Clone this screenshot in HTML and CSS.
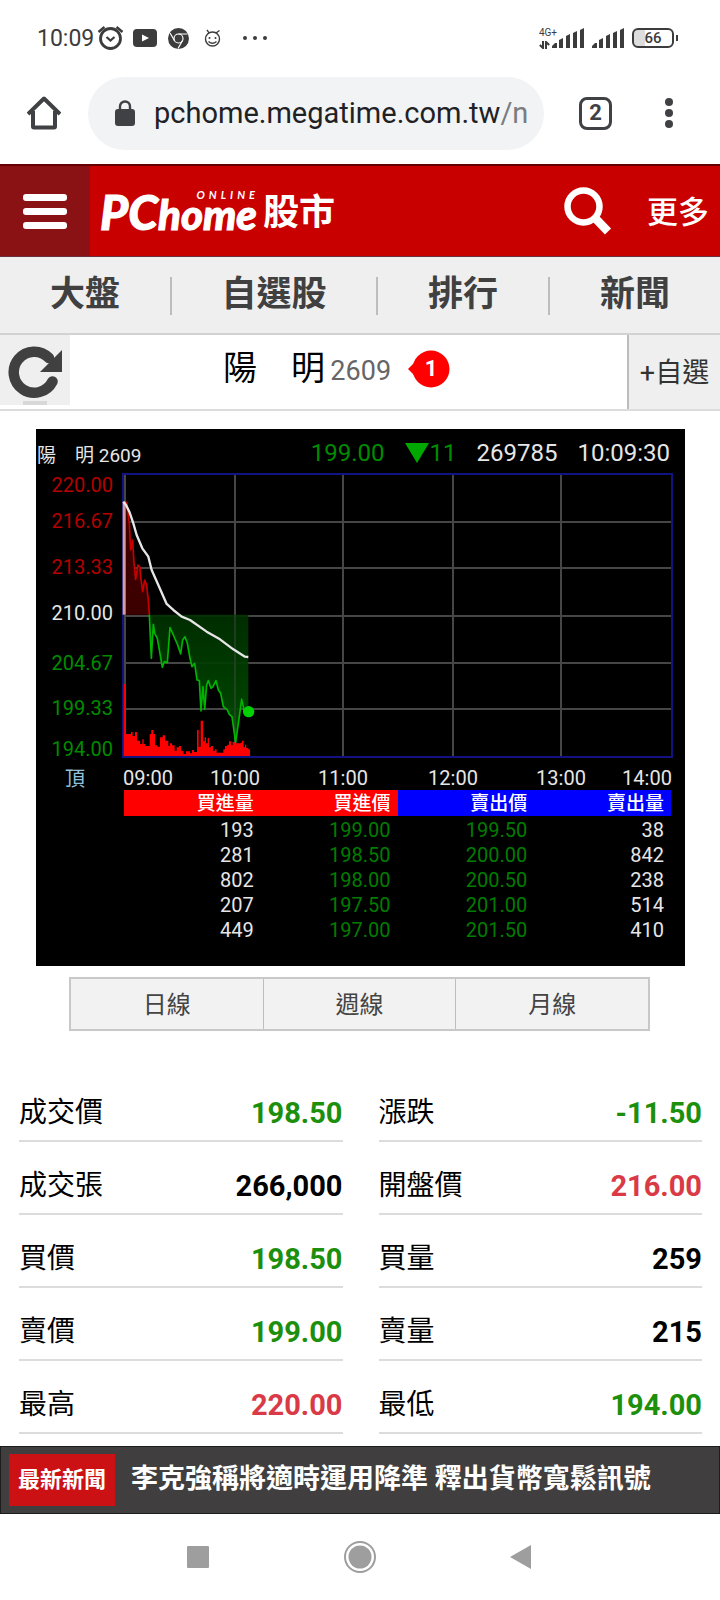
FILE: index.html
```html
<!DOCTYPE html>
<html lang="zh-Hant">
<head>
<meta charset="utf-8">
<meta name="viewport" content="width=device-width, initial-scale=1">
<title>PChome 股市 陽明 2609</title>
<link rel="stylesheet" href="styles.css">
</head>
<body>
<div class="screen">
  <div class="status">
    <div class="status-left">
      <span class="clock">10:09</span>
      <svg width="27" height="26" viewBox="0 0 27 26" fill="none" stroke="#3c3c3c" aria-hidden="true"><circle cx="13.500" cy="13.500" r="10" stroke-width="2.800"/><path d="M9.500 12l4 3.500 4-3.500" stroke-width="2.200"/><path d="M1.500 7l6-5M25.500 7l-6-5" stroke-width="2.400"/></svg>
      <svg width="24" height="18" viewBox="0 0 24 18" aria-hidden="true"><rect width="24" height="18" rx="4" fill="#3c3c3c"/><path d="M9 5.500l7 3.500-7 3.500z" fill="#fff"/></svg>
      <svg class="chrome" width="21" height="21" viewBox="0 0 21 21" aria-hidden="true"><circle cx="10.500" cy="10.500" r="10.500" fill="#3c3c3c"/><g fill="none" stroke="#fff" stroke-width="1.200"><circle cx="10.500" cy="10.500" r="4.500"/><path d="M10.500 6H19.500M6.600 12.700L2 5M14.400 12.700L10 20.500"/></g></svg>
      <svg class="face" width="17" height="18" viewBox="0 0 17 18" fill="none" stroke="#3c3c3c" stroke-width="1.400" aria-hidden="true"><circle cx="8.500" cy="10" r="7"/><path d="M5 4L3 .8M12 4l3.500-2.500M4.500 12.500q4 3.500 8 0"/><circle cx="5.500" cy="9" r="1" fill="#3c3c3c" stroke="none"/><circle cx="11.500" cy="9" r="1" fill="#3c3c3c" stroke="none"/></svg>
      <svg class="more-dots" width="24" height="4" viewBox="0 0 24 4" fill="#3c3c3c" aria-hidden="true"><circle cx="2" cy="2" r="2"/><circle cx="12" cy="2" r="2"/><circle cx="22" cy="2" r="2"/></svg>
    </div>
    <div class="status-right">
      <div class="network">
        <span class="net-type">4G+</span>
        <svg width="11" height="8" viewBox="0 0 11 8" fill="none" stroke="#3c3c3c" stroke-width="2" aria-hidden="true"><path d="M4 0v7L.8 4M7 8V1l3.200 3"/></svg>
      </div>
      <svg width="32" height="20" viewBox="0 0 32 20" fill="#3c3c3c" aria-hidden="true"><path d="M0 20v-2l3-3h2v5zM7 12l4-2v10H7zM14 8l4-2v14h-4zM21 5l4-2v17h-4zM28 2l4-2v20h-4z"/></svg>
      <svg width="32" height="20" viewBox="0 0 32 20" fill="#3c3c3c" aria-hidden="true"><path d="M0 20v-2l3-3h2v5zM7 12l4-2v10H7zM14 8l4-2v14h-4zM21 5l4-2v17h-4zM28 2l4-2v20h-4z"/></svg>
      <div class="battery"><span class="battery-body">66</span><span class="battery-tip"></span></div>
    </div>
  </div>

  <div class="browser">
    <button class="plain home" aria-label="首頁"><svg width="34" height="34" viewBox="0 0 34 34" fill="none" stroke="#3f4144" stroke-width="4" stroke-linejoin="round" aria-hidden="true"><path d="M1 18L17 2.500 33 18M6 15v15.500q0 1 1 1h20q1 0 1-1V15"/></svg></button>
    <div class="address">
      <svg width="20" height="26" viewBox="0 0 20 26" aria-hidden="true"><rect y="9" width="20" height="17" rx="3" fill="#3f4144"/><path d="M5 10V6.500a5 5 0 0 1 10 0V10" fill="none" stroke="#3f4144" stroke-width="2.400"/></svg>
      <span class="url">pchome.megatime.com.tw<span class="path">/n</span></span>
    </div>
    <button class="tabs" aria-label="分頁">2</button>
    <button class="plain menu" aria-label="選單"><svg width="8" height="30" viewBox="0 0 8 30" fill="#3f4144" aria-hidden="true"><circle cx="4" cy="4" r="4"/><circle cx="4" cy="15" r="4"/><circle cx="4" cy="26" r="4"/></svg></button>
  </div>

  <header class="site">
    <button class="drawer" aria-label="選單"><svg width="44" height="35" viewBox="0 0 44 35" fill="#fff" aria-hidden="true"><rect width="44" height="7" rx="3"/><rect y="14" width="44" height="7" rx="3"/><rect y="28" width="44" height="7" rx="3"/></svg></button>
    <a class="logo" href="#"><span class="logo-word"><span class="logo-pc">PC</span>home<span class="logo-online">ONLINE</span></span><span class="logo-cjk">股市</span></a>
    <button class="plain search" aria-label="搜尋"><svg width="48" height="48" viewBox="0 0 48 48" fill="none" stroke="#fff" aria-hidden="true"><circle cx="19.500" cy="19.500" r="16" stroke-width="6.500"/><path d="M31 31l13 13.500" stroke-width="8.500"/></svg></button>
    <a class="more" href="#">更多</a>
  </header>

  <nav class="sections">
    <a href="#">大盤</a>
    <a class="wide" href="#">自選股</a>
    <a href="#">排行</a>
    <a href="#">新聞</a>
  </nav>

  <div class="stock">
    <button class="refresh" aria-label="重新整理"><svg width="54" height="60" viewBox="0 0 54 60" aria-hidden="true"><path d="M44.500 36.500A20.500 20.500 0 1 1 41 13" fill="none" stroke="#404040" stroke-width="10.500" stroke-linecap="round"/><path d="M54 5v22H32z" fill="#404040"/><rect x="15" y="56" width="24" height="4" fill="#d8d8d8"/></svg></button>
    <h1 class="stock-name"><span>陽　明 <small>2609</small></span><span class="badge"><svg width="42" height="38" viewBox="0 0 42 38" fill="#f00" aria-hidden="true"><circle cx="23" cy="19" r="18.500"/><path d="M8 11L0 19l8 8z"/></svg><b>1</b></span></h1>
    <button class="add">+自選</button>
  </div>

  <main>
    <section class="quote">
      <div class="quote-head">
        <span class="quote-name">陽　明 2609</span>
        <span class="quote-nums"><span class="down">199.00</span><span class="down change"><svg width="24" height="20" viewBox="0 0 24 20" fill="#00a800" aria-hidden="true"><path d="M0 0h24L12 20z"/></svg>11</span><span>269785</span><span>10:09:30</span></span>
      </div>
      <svg class="chart" viewBox="0 0 649 318" role="img" aria-label="當日走勢圖">
        <defs><linearGradient id="fall" x1="0" y1="0" x2="0" y2="1"><stop offset="0" stop-color="#003000"/><stop offset="1" stop-color="#005000"/></linearGradient></defs>
        <g fill="none" stroke="#464646" stroke-width="2"><path d="M88 50H636M88 96H636M88 144H636M88 191H636M88 237H636M89 2V285M199 2V285M307 2V285M417 2V285M525 2V285"/></g>
        <rect x="87" y="2" width="549" height="283" fill="none" stroke="#121280" stroke-width="2"/>
        <g transform="translate(74 8) scale(.3333)">
          <path fill="#3c0000" d="M46 65L58 130 62 210 68 180 72 250 77 298 84 255 90 262 92 290 98 335 104 300 110 315 115 360 118 404H46z"/>
          <path fill="url(#fall)" fill-opacity=".92" d="M118 404L121 470 124 535 130 433 134 460 142 475 148 510 157 562 163 545 172 548 180 443 190 465 203 495 212 522 218 480 225 470 232 490 240 535 246 560 254 550 261 600 268 602 273 693 279 620 284 688 290 615 295 602 303 625 309 620 318 602 325 630 332 640 340 680 352 690 358 703 366 710 377 788 385 730 388 710 395 658 402 690 415 694V404z"/>
          <path stroke="#464646" stroke-width="5" stroke-opacity=".5" d="M375 404V760"/>
          <path fill="#d59ca2" d="M38 65h9v339h-9z"/>
          <g fill="none" stroke-width="5" stroke-linejoin="round">
            <path stroke="#c80000" d="M50 65L58 130 62 210 68 180 72 250 77 298 84 255 90 262 92 290 98 335 104 300 110 315 115 360 118 404"/>
            <path stroke="#00b400" d="M118 404L121 470 124 535 130 433 134 460 142 475 148 510 157 562 163 545 172 548 180 443 190 465 203 495 212 522 218 480 225 470 232 490 240 535 246 560 254 550 261 600 268 602 273 693 279 620 284 688 290 615 295 602 303 625 309 620 318 602 325 630 332 640 340 680 352 690 358 703 366 710 377 788 385 730 388 710 395 658 402 690 415 694"/>
            <path stroke="#e6e6e6" stroke-width="7" d="M40 65L48 75 58 95 70 130 80 165 97 205 115 230 125 270 145 315 170 372 190 390 215 410 240 420 290 455 330 478 370 508 405 530 415 531"/>
          </g>
          <circle cx="416" cy="695" r="17" fill="#00d200"/>
          <path fill="#f00" d="M41 828V612H48V762H63V756H68V768H75V756H81V782H90V792H97V778H101V792H106V798H119V762H124V750H130V762H135V796H142V800H150V772H158V766H165V782H175V798H180V790H186V796H194V812H200V802H207V798H213V812H221V822H228V814H240V820H246V810H252V816H261V750H266V800H272V722H279V784H284V772H288V790H293V774H297V802H303V798H309V812H315V808H320V818H340V808H345V798H352V794H357V784H363V796H368V786H374V790H392V788H396V782H401V802H405V794H409V804H415V808H420V828z"/>
        </g>
        <g class="axis" text-anchor="end">
          <g class="up"><text x="77" y="20">220.00</text><text x="77" y="56">216.67</text><text x="77" y="102">213.33</text></g>
          <text x="77" y="148">210.00</text>
          <g class="dn"><text x="77" y="198">204.67</text><text x="77" y="243">199.33</text><text x="77" y="284">194.00</text></g>
        </g>
        <g class="axis" text-anchor="middle"><text class="top" x="39" y="314">頂</text><text x="112" y="313">09:00</text><text x="199" y="313">10:00</text><text x="307" y="313">11:00</text><text x="417" y="313">12:00</text><text x="525" y="313">13:00</text><text x="611" y="313">14:00</text></g>
      </svg>
      <table class="book">
        <thead><tr><th class="bid">買進量</th><th class="bid">買進價</th><th class="ask">賣出價</th><th class="ask">賣出量</th></tr></thead>
        <tbody>
          <tr><td>193</td><td class="px">199.00</td><td class="px">199.50</td><td>38</td></tr>
          <tr><td>281</td><td class="px">198.50</td><td class="px">200.00</td><td>842</td></tr>
          <tr><td>802</td><td class="px">198.00</td><td class="px">200.50</td><td>238</td></tr>
          <tr><td>207</td><td class="px">197.50</td><td class="px">201.00</td><td>514</td></tr>
          <tr><td>449</td><td class="px">197.00</td><td class="px">201.50</td><td>410</td></tr>
        </tbody>
      </table>
    </section>

    <div class="periods"><button>日線</button><button>週線</button><button>月線</button></div>

    <dl class="facts">
      <div><dt>成交價</dt><dd class="green">198.50</dd></div>
      <div><dt>漲跌</dt><dd class="green">-11.50</dd></div>
      <div><dt>成交張</dt><dd>266,000</dd></div>
      <div><dt>開盤價</dt><dd class="red">216.00</dd></div>
      <div><dt>買價</dt><dd class="green">198.50</dd></div>
      <div><dt>買量</dt><dd>259</dd></div>
      <div><dt>賣價</dt><dd class="green">199.00</dd></div>
      <div><dt>賣量</dt><dd>215</dd></div>
      <div><dt>最高</dt><dd class="red">220.00</dd></div>
      <div><dt>最低</dt><dd class="green">194.00</dd></div>
    </dl>
  </main>

  <aside class="news"><b>最新新聞</b><a href="#">李克強稱將適時運用降準 釋出貨幣寬鬆訊號</a></aside>

  <div class="system">
    <button class="plain" aria-label="最近"><svg width="32" height="32" viewBox="0 0 32 32" fill="#9e9e9e" aria-hidden="true"><rect x="5" y="5" width="22" height="22" rx="1"/></svg></button>
    <button class="plain" aria-label="主畫面"><svg width="32" height="32" viewBox="0 0 32 32" aria-hidden="true"><circle cx="16" cy="16" r="15" fill="none" stroke="#9e9e9e" stroke-width="2"/><circle cx="16" cy="16" r="11.500" fill="#9e9e9e"/></svg></button>
    <button class="plain" aria-label="返回"><svg width="32" height="32" viewBox="0 0 32 32" fill="#9e9e9e" aria-hidden="true"><path d="M25 4v24L4 16z"/></svg></button>
  </div>
</div>
</body>
</html>
```

FILE: styles.css
```css
* { box-sizing: border-box; }

body {
  margin: 0;
  background: #fff;
  color: #000;
  font-family: Roboto, "Noto Sans CJK TC", sans-serif;
}

button {
  margin: 0;
  padding: 0;
  border: 0;
  background: none;
  color: inherit;
  font: inherit;
}

a { color: inherit; text-decoration: none; }
svg { display: block; flex: none; }
.plain { display: flex; align-items: center; justify-content: center; }
.screen { display: flex; flex-direction: column; min-height: 100vh; }

/* Status bar */
.status {
  display: flex;
  justify-content: space-between;
  align-items: center;
  height: 76px;
  padding: 0 42px 0 37px;
  color: #3c3c3c;
}
.status-left, .status-right { display: flex; align-items: center; }
.status-left { gap: 9px; }
.clock { margin-right: -6px; font-size: 23px; }
.chrome { margin-left: 2px; }
.face { margin-left: 6px; }
.more-dots { margin-left: 13px; }
.status-right { gap: 8px; }
.network { display: flex; flex-direction: column; gap: 3px; margin-right: -13px; }
.net-type { font-size: 10px; line-height: 10px; }
.battery { display: flex; align-items: center; gap: 2px; }
.battery-body {
  width: 42px;
  border: 2px solid #3c3c3c;
  border-radius: 6px;
  background: linear-gradient(90deg, #ddd 30%, #fff 30%);
  font-size: 15px;
  line-height: 16px;
  font-weight: 500;
  text-align: center;
}
.battery-tip { width: 2px; height: 6px; background: #3c3c3c; }

/* Browser bar */
.browser {
  display: flex;
  align-items: center;
  height: 88px;
  padding: 0 47px 14px 27px;
}
.home { margin-right: 27px; }
.address {
  flex: 1;
  min-width: 0;
  display: flex;
  align-items: center;
  gap: 19px;
  height: 73px;
  padding: 0 14px 0 27px;
  border-radius: 37px;
  background: #f1f3f5;
}
.url {
  flex: 1;
  overflow: hidden;
  color: #1f2124;
  font-size: 29px;
  line-height: 40px;
  white-space: nowrap;
}
.path { color: #7a7c80; }
.tabs {
  width: 33px;
  height: 33px;
  margin: 0 53px 0 35px;
  border: 3px solid #3f4144;
  border-radius: 8px;
  color: #3f4144;
  font-size: 22px;
  line-height: 24px;
  font-weight: 700;
}

/* Site header */
.site {
  display: flex;
  align-items: center;
  height: 93px;
  padding-right: 11px;
  border-top: 2px solid #600;
  border-bottom: 1px solid #6b3040;
  background: #c90000;
  color: #fff;
}
.drawer {
  display: flex;
  align-items: center;
  justify-content: center;
  align-self: stretch;
  width: 90px;
  background: #8b1214;
}
.logo { display: flex; align-items: center; gap: 6px; margin-left: 10px; padding-top: 4px; }
.logo-word {
  position: relative;
  font-family: Lato, sans-serif;
  font-size: 42px;
  line-height: 56px;
  font-style: italic;
  font-weight: 900;
  -webkit-text-stroke: 1px #fff;
}
.logo-pc { font-size: 48px; }
.logo-online {
  position: absolute;
  top: 5px;
  right: -2px;
  font-size: 11px;
  line-height: 12px;
  font-weight: 700;
  letter-spacing: 4px;
  -webkit-text-stroke: 0;
}
.logo-cjk { font-size: 36px; line-height: 56px; font-weight: 700; }
.search { margin-left: auto; }
.more { margin-left: 35px; padding-top: 4px; font-size: 31px; line-height: 40px; font-weight: 500; }

/* Section links */
.sections {
  display: flex;
  height: 78px;
  padding: 20px 0 18px;
  border-bottom: 2px solid #d2d2d2;
  background: #efefef;
  color: #404040;
}
.sections a {
  flex: 5;
  font-size: 35px;
  line-height: 36px;
  font-weight: 700;
  text-align: center;
}
.sections .wide { flex: 6; }
.sections a + a { border-left: 2px solid #bdbdbd; }

/* Stock title */
.stock { display: flex; height: 76px; border-bottom: 2px solid #dcdcdc; }
.refresh {
  display: flex;
  align-items: flex-end;
  justify-content: center;
  width: 70px;
  height: 70px;
  background: #efefef;
}
.stock-name {
  flex: 1;
  display: flex;
  align-items: center;
  justify-content: center;
  gap: 17px;
  margin: 0;
  padding: 0 24px 6px 0;
  font-size: 34px;
  line-height: 44px;
  font-weight: 400;
}
.stock-name small { margin-left: -3px; color: #666; font-size: 27px; }
.badge { position: relative; }
.badge b {
  position: absolute;
  inset: 0 0 0 4px;
  color: #fff;
  font-size: 22px;
  line-height: 38px;
  text-align: center;
}
.add {
  width: 93px;
  padding-bottom: 3px;
  border-left: 2px solid #bdbdbd;
  background: #efefef;
  color: #333;
  font-size: 27px;
}

/* Quote panel */
.quote {
  margin: 18px 35px 0 36px;
  padding-bottom: 23px;
  background: #000;
  color: #e6e6e6;
}
.quote-head {
  display: flex;
  align-items: center;
  justify-content: space-between;
  height: 43px;
  padding: 5px 15px 0 1px;
}
.quote-name { font-size: 19px; }
.quote-nums { display: flex; gap: 20px; font-size: 24px; }
.down { color: #008c00; }
.change { display: flex; align-items: center; gap: 1px; }
.chart { width: 100%; height: auto; }
.axis { fill: #e6e6e6; font-size: 20px; }
.up { fill: #b40000; }
.dn { fill: #008c00; }
.top { fill: #8fc0dc; }
.book {
  width: calc(100% - 102px);
  margin-left: 88px;
  border-collapse: collapse;
  table-layout: fixed;
  font-size: 20px;
  line-height: 25px;
  text-align: right;
}
.book th, .book td { padding: 0 7px 0 0; }
.book th { height: 26px; color: #fff; font-size: 19px; font-weight: 500; }
.book tbody tr:first-child td { padding-top: 2px; }
.bid { background: #f00; }
.ask { background: #00f; }
.px { color: #007d00; }

/* Period buttons */
.periods {
  display: flex;
  margin: 11px 70px 0 69px;
  border: 2px solid #c8c8c8;
  background: #f2f2f2;
}
.periods button {
  flex: 1;
  height: 50px;
  padding-bottom: 4px;
  color: #444;
  font-size: 24px;
}
.periods button + button { border-left: 1px solid #bdbdbd; }

/* Key figures */
.facts {
  display: grid;
  grid-template-columns: 1fr 1fr;
  column-gap: 36px;
  margin: 38px 18px 0 19px;
}
.facts div {
  display: flex;
  justify-content: space-between;
  align-items: flex-end;
  height: 73px;
  padding-bottom: 8px;
  border-bottom: 2px solid #dcdcdc;
  font-size: 28px;
  line-height: 38px;
}
.facts dd { margin: 0; font-size: 29px; font-weight: 700; }
.green { color: #1c8f0c; }
.red { color: #d93a46; }

/* News ticker */
.news {
  display: flex;
  align-items: center;
  gap: 16px;
  height: 68px;
  margin-top: 12px;
  padding: 0 9px 0 8px;
  border: 1px solid #1c1c1c;
  background: #403e3f;
  color: #fff;
  white-space: nowrap;
}
.news b {
  padding: 0 9px;
  background: #cc1114;
  font-size: 22px;
  line-height: 52px;
}
.news a { overflow: hidden; padding-bottom: 2px; font-size: 27px; line-height: 40px; font-weight: 700; }

/* System navigation */
.system {
  flex: 1;
  display: flex;
  justify-content: center;
  align-items: center;
  gap: 130px;
  min-height: 86px;
}
```
